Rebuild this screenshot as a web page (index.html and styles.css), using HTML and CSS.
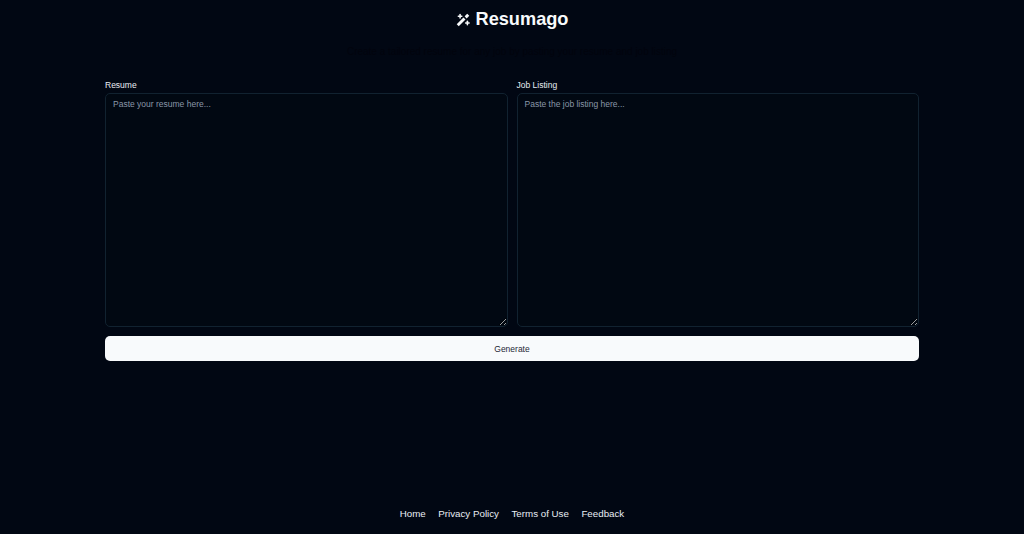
FILE: index.html
```html
<!DOCTYPE html>
<html lang="en">

<head>
    <meta charset="UTF-8">
    <meta name="viewport" content="width=device-width, initial-scale=1.0">
    <title>Resumago</title>
    <link rel="stylesheet" href="styles.css">
</head>

<body>

    <div class="page">
        <header class="header">
            <h1 class="logo">
                <svg class="logo-icon" viewBox="0 0 24 24" fill="none" stroke="currentColor" stroke-width="2.6"
                    stroke-linecap="round" stroke-linejoin="round">
                    <path stroke-width="5" stroke-linecap="butt" d="M3 21 14.5 9.5" />
                    <path stroke-width="5" stroke-linecap="butt" d="M16.5 7.5 21 3" />
                    <path d="M7 2.5v6" />
                    <path d="M4 5.5h6" />
                    <path d="M19.5 14v6" />
                    <path d="M16.500 17h6" />
                </svg>
                Resumago
            </h1>
            <p class="tagline">Create a tailored resume for any job by pasting your resume and job listing</p>
        </header>

        <!-- Resume and job listing inputs -->
        <form class="form">
            <div class="fields">
                <div class="field">
                    <label class="label" for="resume">Resume</label>
                    <textarea class="input" id="resume" placeholder="Paste your resume here..."></textarea>
                </div>
                <div class="field">
                    <label class="label" for="listing">Job Listing</label>
                    <textarea class="input" id="listing" placeholder="Paste the job listing here..."></textarea>
                </div>
            </div>
            <button class="generate" type="button">Generate</button>
        </form>

        <footer class="footer">
            <a href="#">Home</a>
            <a href="#">Privacy Policy</a>
            <a href="#">Terms of Use</a>
            <a href="#">Feedback</a>
        </footer>
    </div>

</body>

</html>
```

FILE: styles.css
```css
* {
    margin: 0;
    padding: 0;
    box-sizing: border-box;
}

body {
    font-family: "Liberation Sans", Arial, sans-serif;
    background-color: #010713;
    color: #f8fafc;
}

.page {
    display: flex;
    flex-direction: column;
    height: 534px;
    padding: 0 105px;
}

.header {
    text-align: center;
    padding-top: 8px;
}

.logo {
    display: flex;
    justify-content: center;
    align-items: center;
    gap: 6px;
    font-size: 18.2px;
    line-height: 23px;
    font-weight: 700;
}

.logo-icon {
    width: 14px;
    height: 14px;
}

.tagline {
    margin-top: 14px;
    font-size: 10px;
    line-height: 14px;
    color: #01040d;
}

.form {
    display: flex;
    flex-direction: column;
    gap: 9px;
    margin-top: 21px;
}

.fields {
    display: grid;
    grid-template-columns: 1fr 1fr;
    gap: 9px;
}

.field {
    display: flex;
    flex-direction: column;
    gap: 2px;
}

.label {
    font-size: 8.5px;
    line-height: 11px;
    color: #e8edf3;
}

.input {
    display: block;
    width: 100%;
    height: 234px;
    padding: 4px 7px;
    font-family: inherit;
    font-size: 8.5px;
    line-height: 12px;
    color: #f8fafc;
    background-color: #010812;
    border: 1px solid #112230;
    border-radius: 5px;
}

.input::placeholder {
    color: #8a97a8;
}

.generate {
    height: 25px;
    font-family: inherit;
    font-size: 8.5px;
    color: #1e2736;
    background-color: #f8fafc;
    border: none;
    border-radius: 5px;
}

.footer {
    display: flex;
    justify-content: center;
    gap: 12.5px;
    margin-top: auto;
    padding-bottom: 13px;
    font-size: 9.75px;
    line-height: 14px;
}

.footer a {
    color: #e8edf3;
    text-decoration: none;
}
```
